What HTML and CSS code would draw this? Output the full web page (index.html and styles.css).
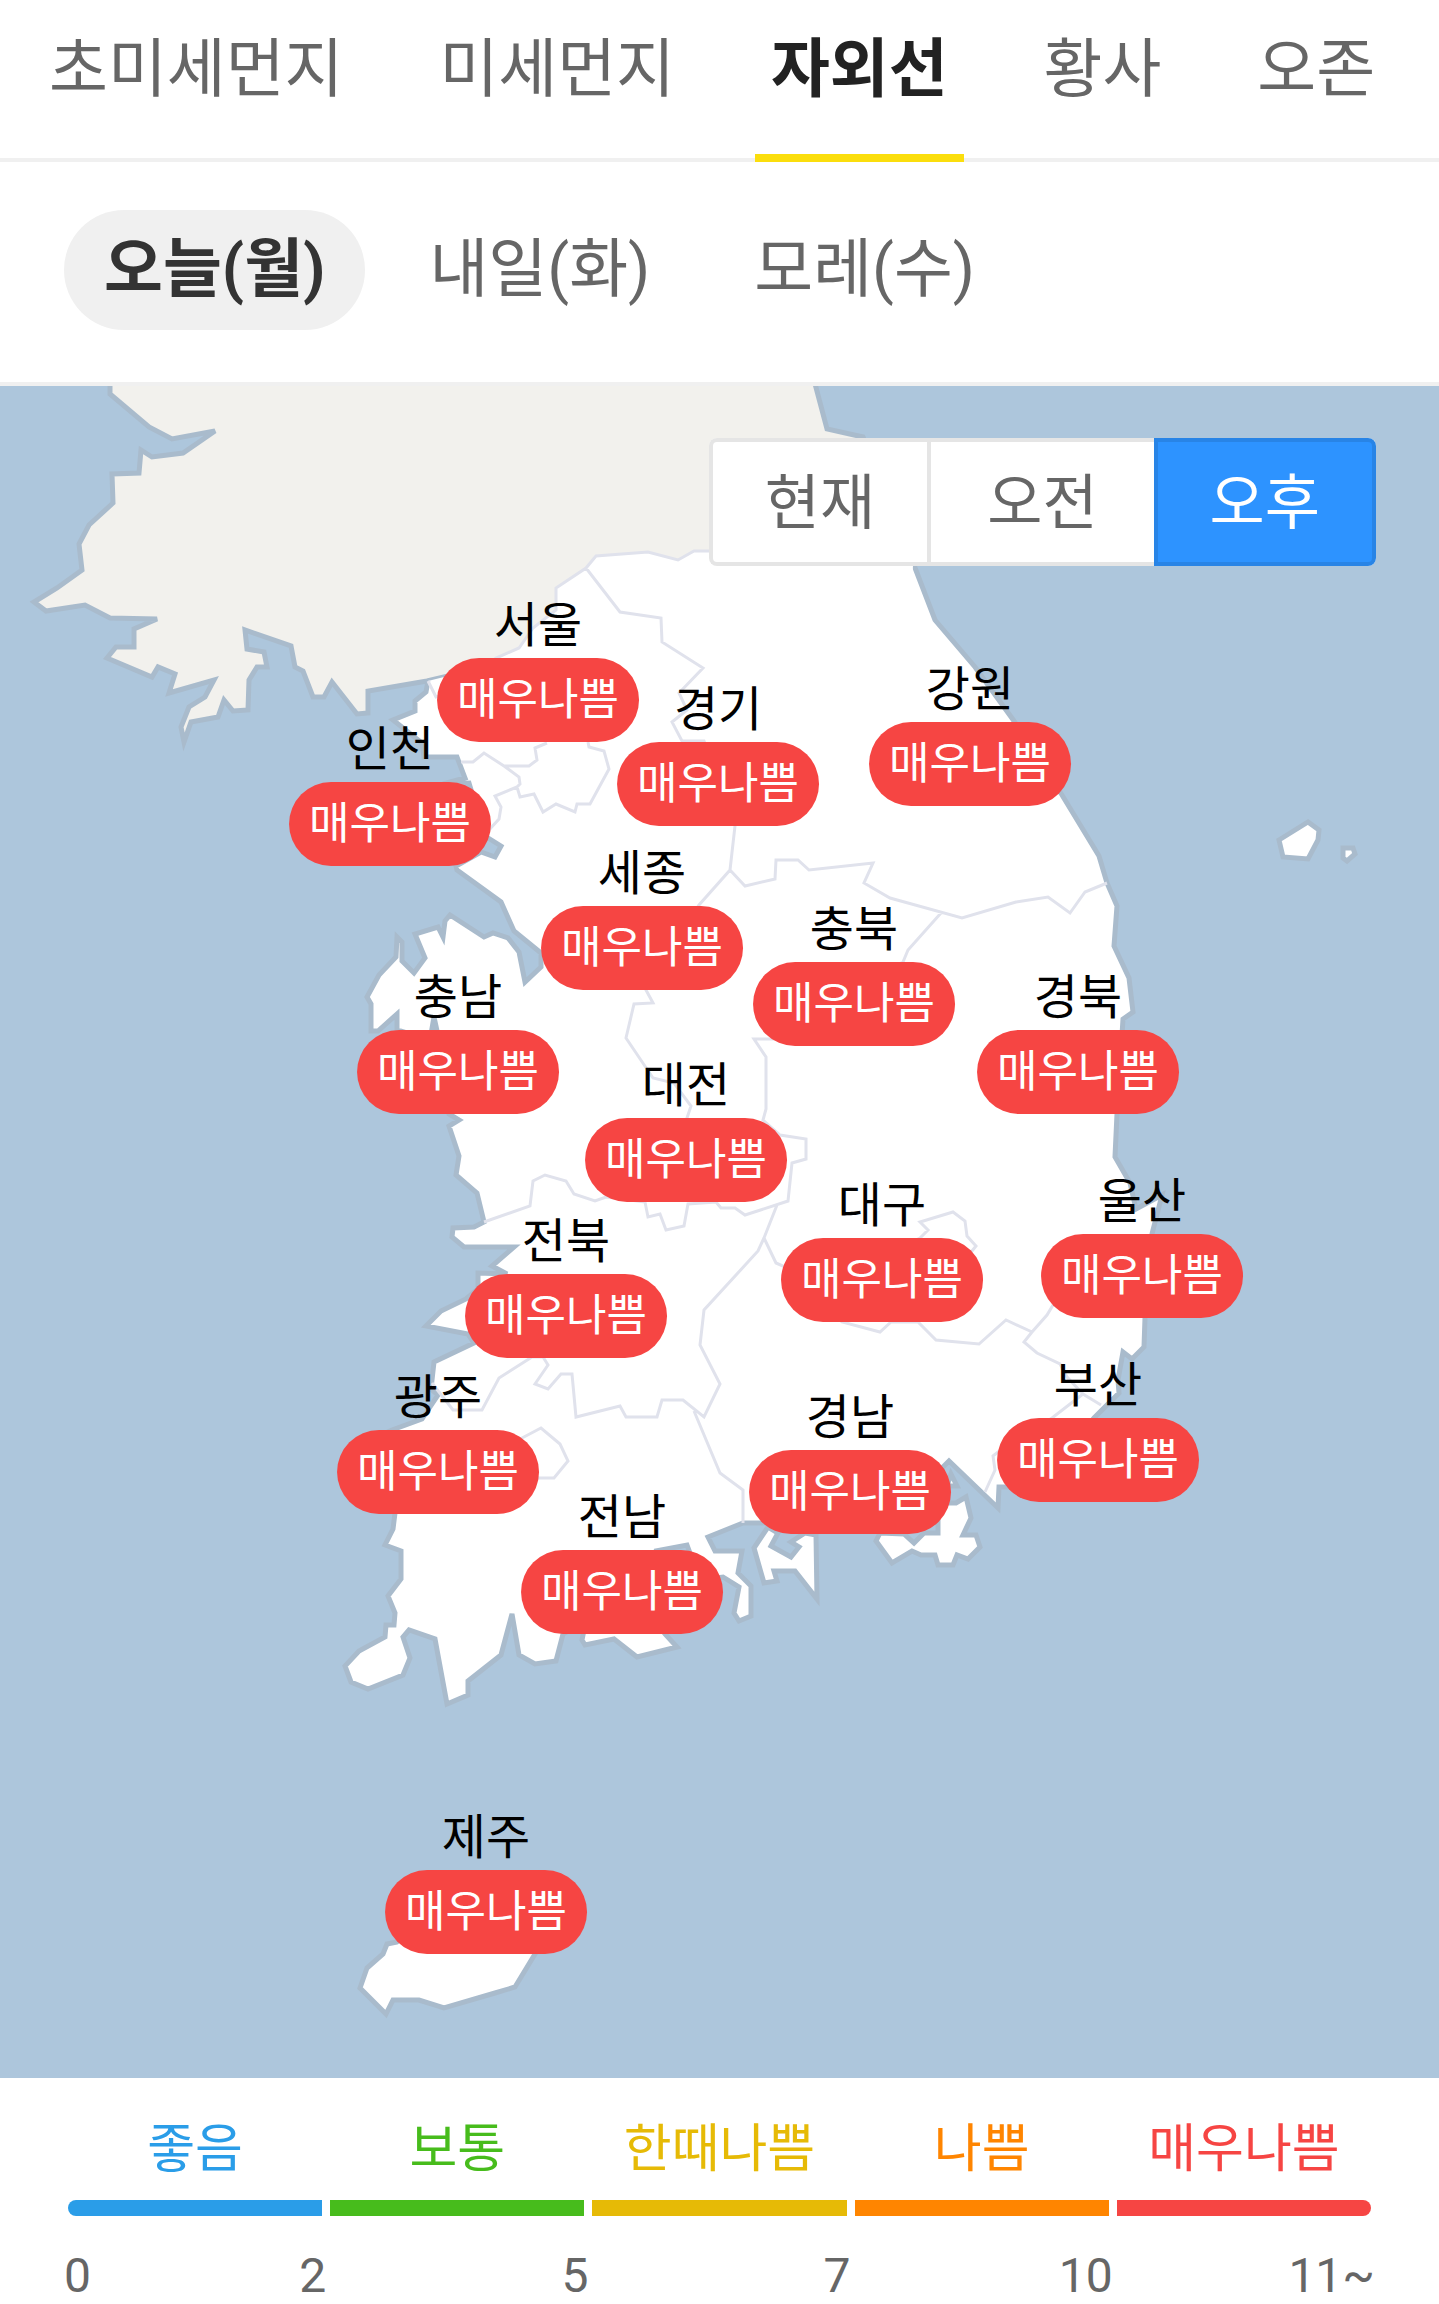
FILE: index.html
```html
<!DOCTYPE html>
<html lang="ko">
<head>
    <meta charset="UTF-8">
    <meta name="viewport" content="width=device-width, initial-scale=1.0">
    <title>자외선</title>
    <link rel="stylesheet" href="styles.css">
</head>
<body>

<!-- Category tabs -->
<nav class="tabs">
    <a href="#">초미세먼지</a>
    <a href="#">미세먼지</a>
    <a href="#" class="active">자외선</a>
    <a href="#">황사</a>
    <a href="#">오존</a>
</nav>

<!-- Day selection -->
<div class="days">
    <button type="button" class="active">오늘(월)</button>
    <button type="button">내일(화)</button>
    <button type="button">모레(수)</button>
</div>

<!-- Map -->
<main class="map">
    <svg class="map-image" viewBox="0 386 1439 1692" aria-hidden="true">
        <path class="north" d="M110 380V394L149 427 172 439 215 431 183 453 152 457 141 450 139 473 112 474 113 503 89 525 79 544 82 570 57 588 34 602 46 611 85 605 110 618 157 619 134 629V647H116L107 658 152 677 158 667 175 674 169 693 214 680 205 697 189 707 181 727 184 742 191 722 218 717 224 700 233 711 248 710 249 680 257 667H267L264 652 247 649 245 630 291 646 295 667 303 671 313 697H324L332 682 357 714 368 713V691L427 681 912 566 863 437 827 429 814 380"/>
        <path class="south" d="M912 560L935 620 975 667 1014 721 1062 795 1099 856 1107 883 1117 906 1114 946 1129 978 1133 1012 1123 1019 1117 1114 1115 1157 1130 1183 1136 1209 1162 1195 1152 1234 1145 1318 1144 1347 1132 1359 1123 1352 1118 1380 1119 1393 1094 1418 1040 1487H999L998 1508 949 1461 930 1480 860 1500 773 1523H743L708 1537 715 1551H742L738 1573 751 1586V1616L739 1621 734 1613 739 1587 723 1577 700 1580 687 1545 656 1551 640 1600 665 1634 677 1647 637 1657 614 1639 585 1645 582 1640 586 1620 563 1634 556 1661 535 1664 519 1655 512 1614 501 1655 468 1681V1695L447 1704 435 1639 409 1630 403 1637 410 1658 403 1675 368 1689 351 1682 345 1666 359 1651 385 1637 386 1625H394L395 1613 388 1596 401 1579V1551L385 1545 393 1529 395 1513 370 1440 392 1430 422 1419 438 1395 431 1389 434 1362 474 1343 468 1334 426 1326 441 1311 466 1299 478 1289V1273L507 1274 492 1266 514 1247H464L452 1237 453 1228 474 1227 484 1222 477 1193 456 1175 459 1156 449 1126 459 1120 449 1114 439 1040 434 1017 430 1040 397 1030V1014L378 1031H371V1004L367 997 379 975 396 957 397 937 402 942V961L414 973 425 958 415 934 438 927 443 937 445 921 450 915 484 937 493 933 508 938 519 952 525 982 541 967V953L514 931 501 902 457 870 456 866 481 852 495 857 501 846 485 836 469 783 443 784 465 778 457 757H424L422 743 393 720 415 711V701L426 692 428 681"/>
        <path class="south-top" d="M428 681L436 697 460 690 496 658 519 648 533 628 556 610V588L586 568 596 556 648 552 678 560 694 551H905L913 566 900 700H500"/>
        <path class="islands" d="M768 1527L754 1548 764 1583 777 1581 774 1571H795L817 1599 816 1535 805 1533 791 1542 799 1547 791 1557 771 1546 778 1533z
            M880 1533L876 1541 892 1563 912 1551 921 1555H935L938 1565H953L957 1555 968 1559 980 1547 976 1535H963L971 1518 966 1497 956 1503H945L938 1517V1533H924L914 1543 904 1534z
            M1279 840L1308 822 1319 830 1318 840 1308 859 1283 857z
            M1343 848H1353L1355 854 1347 861 1343 858z
            M397 1942L387 1944 383 1954 367 1968 360 1988 386 2014 393 2000H419L444 2008 495 1993 515 1987 535 1954 560 1900 450 1895z
            M951 1474L957 1486H947z"/>
        <!-- Province borders -->
        <path class="borders" d="M428 681L436 697 460 690 496 658 519 648 533 628 556 610V588L586 568 596 556 648 552 678 560 694 551H905
            M586 568L620 612 661 618 662 642 703 668 679 693 687 710 672 722 682 741 704 741 735 826 730 870 699 905 646 990 653 1003 634 1004 626 1038 653 1078 674 1083 691 1106 687 1118 645 1190
            M730 870L745 886 775 879 776 860H798L809 870 873 863 864 883 890 898 962 918 1016 902 1048 897 1070 913 1085 892 1107 883
            M941 913L908 950 903 962 774 1039H754L766 1057V1109L763 1120 780 1135 806 1139V1159L792 1163 788 1201 745 1215 735 1208H721L716 1202 688 1204 684 1226 666 1230 660 1214 648 1217 645 1202 606 1197 595 1201 574 1194 566 1181 545 1175 533 1181 530 1206 484 1222
            M777 1205L764 1238 758 1251 704 1310 700 1345 720 1384 704 1417 683 1400H662L657 1417H626L620 1406 576 1417 572 1374H561L548 1389 535 1384 548 1365 543 1357H532L499 1378 482 1410H453L432 1383
            M694 1411L720 1473 743 1490V1523
            M522 1438L541 1428 560 1444 568 1461 554 1478H539L500 1460z
            M764 1238L776 1263 783 1266 842 1322 880 1332 891 1322 918 1322 936 1340 979 1344 1006 1320 1032 1332 1024 1342 1037 1353 1060 1364 1067 1377 1083 1394 1101 1405
            M1032 1332L1047 1315 1053 1305
            M1083 1394L1052 1418 998 1452 993 1456 995 1470 985 1492
            M900 1248L920 1238 928 1230 920 1222 953 1212 965 1221 967 1236 976 1246 972 1251 918 1322
            M588 742L589 747 604 751 609 769 590 804H577L575 812 556 804 543 812 534 794 520 797 517 787 520 784 519 777 504 766H529L537 760 535 748 547 743
            M461 762H473L484 753 504 766M517 787L495 796 501 807 499 819 489 830"/>
    </svg>

    <div class="times">
        <button type="button">현재</button>
        <button type="button" class="middle">오전</button>
        <button type="button" class="active">오후</button>
    </div>

    <div class="region seoul"><span class="name">서울</span><span class="grade">매우나쁨</span></div>
    <div class="region incheon"><span class="name">인천</span><span class="grade">매우나쁨</span></div>
    <div class="region gyeonggi"><span class="name">경기</span><span class="grade">매우나쁨</span></div>
    <div class="region gangwon"><span class="name">강원</span><span class="grade">매우나쁨</span></div>
    <div class="region sejong"><span class="name">세종</span><span class="grade">매우나쁨</span></div>
    <div class="region chungbuk"><span class="name">충북</span><span class="grade">매우나쁨</span></div>
    <div class="region chungnam"><span class="name">충남</span><span class="grade">매우나쁨</span></div>
    <div class="region daejeon"><span class="name">대전</span><span class="grade">매우나쁨</span></div>
    <div class="region gyeongbuk"><span class="name">경북</span><span class="grade">매우나쁨</span></div>
    <div class="region jeonbuk"><span class="name">전북</span><span class="grade">매우나쁨</span></div>
    <div class="region gwangju"><span class="name">광주</span><span class="grade">매우나쁨</span></div>
    <div class="region jeonnam"><span class="name">전남</span><span class="grade">매우나쁨</span></div>
    <div class="region daegu"><span class="name">대구</span><span class="grade">매우나쁨</span></div>
    <div class="region ulsan"><span class="name">울산</span><span class="grade">매우나쁨</span></div>
    <div class="region busan"><span class="name">부산</span><span class="grade">매우나쁨</span></div>
    <div class="region gyeongnam"><span class="name">경남</span><span class="grade">매우나쁨</span></div>
    <div class="region jeju"><span class="name">제주</span><span class="grade">매우나쁨</span></div>
</main>

<!-- Grade legend -->
<ul class="legend">
    <li class="good">
        <span class="label">좋음</span>
        <span class="bar"></span>
        <span class="range"><span>0</span><span>2</span></span>
    </li>
    <li class="normal">
        <span class="label">보통</span>
        <span class="bar"></span>
        <span class="range"><span>5</span></span>
    </li>
    <li class="sometimes">
        <span class="label">한때나쁨</span>
        <span class="bar"></span>
        <span class="range"><span>7</span></span>
    </li>
    <li class="bad">
        <span class="label">나쁨</span>
        <span class="bar"></span>
        <span class="range"><span>10</span></span>
    </li>
    <li class="very-bad">
        <span class="label">매우나쁨</span>
        <span class="bar"></span>
        <span class="range"><span>11~</span></span>
    </li>
</ul>

</body>
</html>
```
FILE: styles.css
```css
* {
    box-sizing: border-box;
}

body {
    margin: 0;
    background-color: #fff;
    color: #666;
    font-family: Roboto, "Noto Sans CJK KR", sans-serif;
}

button {
    padding: 0;
    border: 0;
    background: none;
    color: inherit;
    font-family: inherit;
    cursor: pointer;
}

/* Tabs */
.tabs {
    display: flex;
    gap: 64px;
    padding: 0 33px;
    border-bottom: 4px solid #f0f0f0;
    white-space: nowrap;
}

.tabs a {
    margin-bottom: -4px;
    padding: 22px 16px 36px;
    border-bottom: 8px solid transparent;
    color: #666;
    font-size: 64px;
    line-height: 96px;
    text-decoration: none;
}

.tabs .active {
    border-bottom-color: #fbde0d;
    color: #222;
    font-weight: bold;
}

/* Days */
.days {
    display: flex;
    gap: 24px;
    padding: 48px 64px 52px;
    border-bottom: 4px solid #f0f0f0;
}

.days button {
    padding: 0 40px;
    border-radius: 60px;
    font-size: 64px;
    line-height: 120px;
    white-space: nowrap;
}

.days .active {
    background-color: #f0f0f0;
    color: #333;
    font-weight: bold;
}

/* Map */
.map {
    position: relative;
    background-color: #adc6dc;
}

.map-image {
    display: block;
    width: 100%;
}

.north,
.south,
.islands {
    stroke: #a9bbcc;
    stroke-width: 5;
}

.north {
    fill: #f2f1ed;
}

.south,
.south-top,
.islands {
    fill: #fff;
}

.borders {
    fill: none;
    stroke: #e0e2ec;
    stroke-width: 3;
}

.times {
    position: absolute;
    top: 52px;
    right: 63px;
    display: flex;
    background-color: #fff;
    border-radius: 8px;
}

.times button {
    padding: 4px 52px 0;
    border: 4px solid #e5e5e5;
    border-right-width: 0;
    font-size: 60px;
    line-height: 116px;
}

.times button:first-child {
    border-radius: 8px 0 0 8px;
}

.times .middle {
    padding: 4px 56px 0;
}

.times .active {
    border-color: #2884e6;
    border-right-width: 4px;
    border-radius: 0 8px 8px 0;
    background-color: #2d93ff;
    color: #fff;
}

.region {
    position: absolute;
    display: flex;
    flex-direction: column;
    align-items: center;
    transform: translateX(-50%);
    white-space: nowrap;
}

.name {
    color: #000;
    font-size: 48px;
    line-height: 64px;
}

.grade {
    padding: 0 20px;
    border-radius: 42px;
    background-color: #f64543;
    color: #fff;
    font-size: 44px;
    line-height: 84px;
}

.seoul { left: 37.39%; top: 12.29%; }
.incheon { left: 27.1%; top: 19.62%; }
.gyeonggi { left: 49.9%; top: 17.26%; }
.gangwon { left: 67.41%; top: 16.08%; }
.sejong { left: 44.61%; top: 26.95%; }
.chungbuk { left: 59.35%; top: 30.26%; }
.chungnam { left: 31.83%; top: 34.28%; }
.daejeon { left: 47.67%; top: 39.48%; }
.gyeongbuk { left: 74.91%; top: 34.28%; }
.jeonbuk { left: 39.33%; top: 48.7%; }
.gwangju { left: 30.44%; top: 57.92%; }
.jeonnam { left: 43.22%; top: 65.01%; }
.daegu { left: 61.29%; top: 46.57%; }
.ulsan { left: 79.36%; top: 46.34%; }
.busan { left: 76.3%; top: 57.21%; }
.gyeongnam { left: 59.07%; top: 59.1%; }
.jeju { left: 33.77%; top: 83.92%; }

/* Legend */
.legend {
    display: grid;
    grid-template-columns: repeat(5, 1fr);
    margin: 0;
    padding: 36px 64px 0;
    list-style: none;
}

.legend li {
    display: flex;
    flex-direction: column;
}

.label {
    font-size: 52px;
    line-height: 72px;
    text-align: center;
}

.bar {
    height: 16px;
    margin: 14px 4px 32px;
    background-color: currentColor;
}

.good .bar {
    border-radius: 8px 0 0 8px;
}

.very-bad .bar {
    border-radius: 0 8px 8px 0;
}

.range {
    display: flex;
    justify-content: flex-end;
    color: #666;
    font-size: 48px;
    line-height: 56px;
}

.good .range {
    justify-content: space-between;
}

.good { color: #2a9de8; }
.normal { color: #47bc1c; }
.sometimes { color: #e6ba06; }
.bad { color: #ff8500; }
.very-bad { color: #f64543; }
```
